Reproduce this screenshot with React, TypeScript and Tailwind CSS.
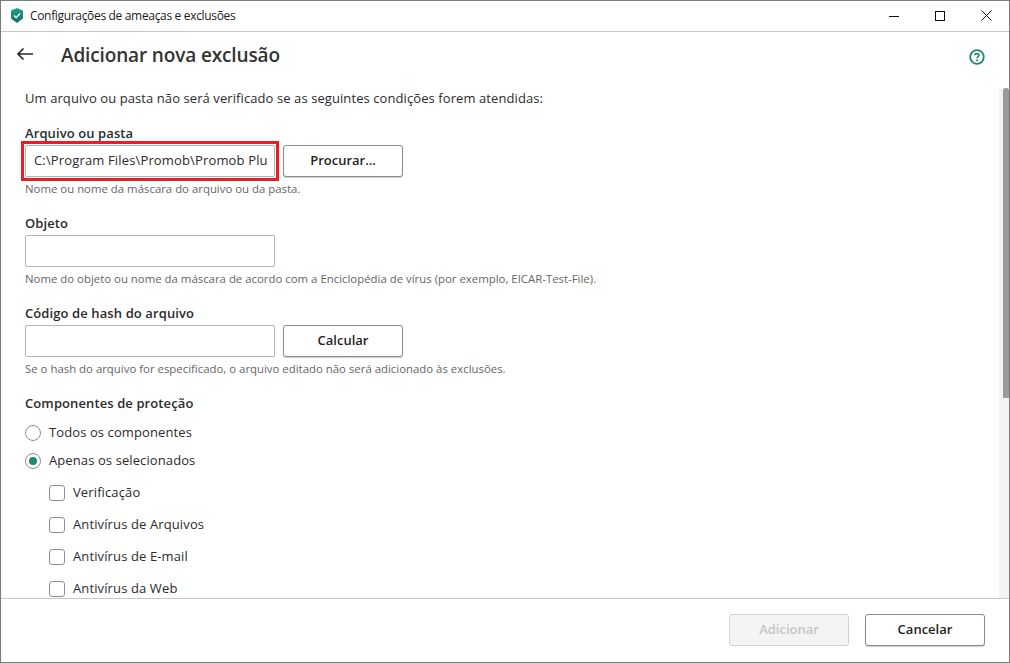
import React from "react";

const font = { fontFamily: '"Open Sans","Noto Sans",sans-serif' };

function Field({ label, hint, value, button, highlight }: { label: string; hint: string; value?: string; button?: string; highlight?: boolean }) {
  return (
    <div className="flex flex-col">
      <div className="h-[20px] text-[13px] leading-[20px] font-semibold tracking-[0.1px] text-[#2b2b2b]">{label}</div>
      <div className="mt-[2px] flex items-center gap-[8px]">
        <div className={highlight ? "-m-[4px] border-[3px] border-[#ed1c24] p-[1px]" : ""}>
          <div className="flex h-[32px] w-[250px] items-center overflow-hidden whitespace-nowrap rounded-[2px] border border-[#b5b5b5] bg-white pl-[8px] text-[13px] tracking-[0.15px] text-[#2b2b2b]">{value}</div>
        </div>
        {button && (
          <div className="flex h-[32px] w-[120px] items-center justify-center rounded-[3px] border border-[#8c8c8c] bg-white text-[13px] font-semibold text-[#1f1f1f] shadow-[0_1px_1px_rgba(0,0,0,0.2)]">{button}</div>
        )}
      </div>
      <div className="mt-[3px] h-[18px] text-[11.4px] leading-[18px] text-[#666666]">{hint}</div>
    </div>
  );
}

function Radio({ label, checked }: { label: string; checked?: boolean }) {
  return (
    <div className="flex h-[28px] items-center gap-[8px] text-[13px] tracking-[0.1px] text-[#2b2b2b]">
      <div className="flex h-[16px] w-[16px] items-center justify-center rounded-full border-[1.5px] border-[#8f8f8f] bg-white">
        {checked && <div className="h-[8px] w-[8px] rounded-full bg-[#1d8a70]" />}
      </div>
      {label}
    </div>
  );
}

function Check({ label }: { label: string }) {
  return (
    <div className="flex h-[32px] shrink-0 items-center gap-[8px] text-[13px] tracking-[0.12px] text-[#2b2b2b]">
      <div className="h-[16px] w-[16px] rounded-[3px] border-[1.5px] border-[#8f8f8f] bg-white" />
      {label}
    </div>
  );
}

export default function App() {
  return (
    <div style={font} className="flex h-[663px] w-[1010px] flex-col overflow-hidden border-x-[1px] border-y-[1px] border-[#7a7a7a] bg-white">
      <div className="flex h-[31px] shrink-0 items-center border-b border-[#c8c8c8]">
        <svg width="16" height="16" viewBox="0 0 16 16" className="ml-[8px]">
          <defs>
            <linearGradient id="sh" x1="0" y1="0" x2="0" y2="1">
              <stop offset="0" stopColor="#1fa286" />
              <stop offset="1" stopColor="#146f5b" />
            </linearGradient>
          </defs>
          <path d="M8 0 14 2.500V10.500L8 15 2 10.500V2.500Z" fill="url(#sh)" />
          <path d="m5 7.500 2.200 2.200L11 5.500" fill="none" stroke="#e8fff8" strokeWidth="1.300" />
        </svg>
        <span className="ml-[5px] text-[12px] tracking-[-0.33px] text-[#1a1a1a]">Configurações de ameaças e exclusões</span>
        <div className="mb-[1px] ml-auto flex items-center">
          <div className="flex w-[46px] justify-center">
            <svg width="10" height="10" viewBox="0 0 10 10"><path d="M0 5.500h10" stroke="#111" /></svg>
          </div>
          <div className="flex w-[46px] justify-center">
            <svg width="10" height="10" viewBox="0 0 10 10"><rect x=".5" y=".5" width="9" height="9" fill="none" stroke="#111" /></svg>
          </div>
          <div className="flex w-[46px] justify-center">
            <svg width="11" height="11" viewBox="0 0 11 11"><path d="m.5.5 10 10M10.500.5l-10 10" stroke="#111" /></svg>
          </div>
        </div>
      </div>

      <div className="flex h-[56px] shrink-0 items-center pb-[10px]">
        <svg width="18" height="14" viewBox="0 0 18 14" className="mb-[2px] ml-[15px]">
          <path d="M17 7H2M7.500 1.500 2 7l5.500 5.500" fill="none" stroke="#2b2b2b" strokeWidth="1.700" />
        </svg>
        <span className="ml-[27px] text-[19px] font-semibold tracking-[-0.14px] text-[#333333]">Adicionar nova exclusão</span>
        <svg width="16" height="16" viewBox="0 0 16 16" className="ml-auto mr-[24px] mt-[4px]">
          <circle cx="8" cy="8" r="6.800" fill="none" stroke="#1d8a70" strokeWidth="1.800" />
          <path d="M5.900 6.300C6 4 10 4 10 6.300 10 7.600 8 7.600 8 9.200" fill="none" stroke="#1d8a70" strokeWidth="1.600" />
          <circle cx="8" cy="11.300" r="1" fill="#1d8a70" />
        </svg>
      </div>

      <div className="flex min-h-0 flex-1">
        <div className="flex min-w-0 flex-1 flex-col overflow-hidden pl-[24px]">
          <div className="h-[20px] shrink-0 text-[13px] leading-[20px] tracking-[0.085px] text-[#2b2b2b]">Um arquivo ou pasta não será verificado se as seguintes condições forem atendidas:</div>
          <div className="mt-[15px] flex shrink-0 flex-col gap-[15px]">
            <Field label="Arquivo ou pasta" value="C:\Program Files\Promob\Promob Plu" button="Procurar..." hint="Nome ou nome da máscara do arquivo ou da pasta." highlight />
            <Field label="Objeto" hint="Nome do objeto ou nome da máscara de acordo com a Enciclopédia de vírus (por exemplo, EICAR-Test-File)." />
            <Field label="Código de hash do arquivo" button="Calcular" hint="Se o hash do arquivo for especificado, o arquivo editado não será adicionado às exclusões." />
          </div>
          <div className="mt-[15px] h-[20px] shrink-0 text-[13px] leading-[20px] font-semibold tracking-[0.1px] text-[#2b2b2b]">Componentes de proteção</div>
          <div className="mt-[6px] flex shrink-0 flex-col">
            <Radio label="Todos os componentes" />
            <Radio label="Apenas os selecionados" checked />
          </div>
          <div className="mt-[2px] flex flex-col pl-[24px]">
            <Check label="Verificação" />
            <Check label="Antivírus de Arquivos" />
            <Check label="Antivírus de E-mail" />
            <Check label="Antivírus da Web" />
          </div>
        </div>
        <div className="flex w-[10px] shrink-0 justify-end bg-[#f3f3f3]">
          <div className="h-[310px] w-[6px] rounded-t-[3px] bg-[#9a9a9a]" />
        </div>
      </div>

      <div className="flex h-[64px] shrink-0 items-center justify-end gap-[16px] border-t border-[#c8c8c8] pb-[1px] pr-[24px]">
        <div className="flex h-[32px] w-[120px] items-center justify-center rounded-[3px] border border-[#d2d2d2] bg-[#f4f4f4] text-[13px] font-semibold text-[#c4c4c4]">Adicionar</div>
        <div className="flex h-[32px] w-[120px] items-center justify-center rounded-[3px] border border-[#8c8c8c] bg-white text-[13px] font-semibold text-[#1f1f1f] shadow-[0_1px_1px_rgba(0,0,0,0.2)]">Cancelar</div>
      </div>
    </div>
  );
}
